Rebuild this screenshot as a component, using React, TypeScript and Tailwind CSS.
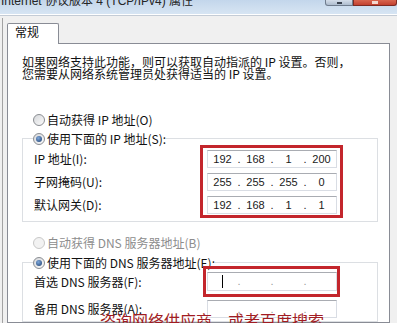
import React from 'react';

const cjk = "font-['Noto_Sans_CJK_SC',sans-serif]";

interface RadioProps {
  checked?: boolean;
  disabled?: boolean;
}

const Radio = ({ checked, disabled }: RadioProps) => (
  <span
    className={`w-[12px] h-[12px] rounded-full border flex items-center justify-center shrink-0 ${
      disabled
        ? 'border-[#c8c8c8] bg-[#f2f2f2]'
        : 'border-[#8a8d92] bg-linear-to-br from-[#d6d8db] to-[#fbfbfb]'
    }`}
  >
    {checked && (
      <span className="w-[6px] h-[6px] rounded-full bg-[radial-gradient(circle_at_40%_35%,#7ea8dc,#1c3d6c)]" />
    )}
  </span>
);

interface RadioRowProps extends RadioProps {
  label: string;
}

const RadioRow = ({ label, checked, disabled }: RadioRowProps) => (
  <div className="h-[13px] flex items-center gap-[2px]">
    <Radio checked={checked} disabled={disabled} />
    <span
      className={`text-[12px] leading-[12px] whitespace-nowrap ${
        disabled ? 'text-[#8d8d8d]' : 'text-[#111]'
      }`}
    >
      {label}
    </span>
  </div>
);

interface IpFieldProps {
  values?: string[];
  caret?: boolean;
  height: string;
}

const IpField = ({ values, caret, height }: IpFieldProps) => {
  const cells = values ?? ['', '', '', ''];
  return (
    <div
      className={`w-[130px] ${height} bg-white border border-[#d9dde4] border-t-[#a9acb2] flex items-center font-['Liberation_Sans',sans-serif] text-[11px] text-[#1a1a1a]`}
    >
      {cells.map((v, i) => (
        <React.Fragment key={i}>
          <span className="flex-1 text-center flex items-center justify-center">
            {caret && i === 0 ? <span className="w-px h-[13px] bg-black" /> : v}
          </span>
          {i < 3 && (
            <span className={`w-[4px] text-center ${values ? '' : 'text-[#9a9a9a]'}`}>.</span>
          )}
        </React.Fragment>
      ))}
    </div>
  );
};

const Label = ({ text }: { text: string }) => (
  <div className="h-[18px] flex items-center ml-[1px] text-[12px] leading-[12px] text-[#111] whitespace-nowrap">
    {text}
  </div>
);

export default function App() {
  return (
    <div className={`w-[397px] h-[323px] overflow-hidden relative flex flex-col bg-[#f0f0f0] ${cjk}`}>
      {/* title bar */}
      <div className="h-[14px] shrink-0 flex justify-between items-start bg-linear-to-b from-[#c3d6eb] to-[#d7e5f3] overflow-hidden">
        <span className="-mt-[5px] ml-[1px] text-[12px] leading-[12px] text-[#252525] whitespace-nowrap font-['Liberation_Sans','Noto_Sans_CJK_SC',sans-serif]">
          Internet 协议版本 4 (TCP/IPv4) 属性
        </span>
        <div className="flex">
          <div className="w-[28px] h-[6px] rounded-bl-[3px] border border-t-0 border-[#6f7c8d] bg-linear-to-b from-[#d3dde9] to-[#aebcce] flex justify-center">
            <span className="mt-[2px] w-[5px] h-[2px] bg-[#3a4350]" />
          </div>
          <div className="w-[44px] h-[6px] rounded-br-[3px] border border-t-0 border-[#7d2a22] bg-linear-to-b from-[#d8654f] to-[#c2402f] flex justify-center">
            <span className="mt-[1px] w-[6px] h-[3px] bg-[#f3d7cf]" />
          </div>
        </div>
      </div>
      <div className="h-px bg-white shrink-0" />
      <div className="h-px bg-[#c4ccd6] shrink-0" />

      {/* dialog body */}
      <div className="flex-1 mt-[2px] ml-[2px] border-l border-[#a3a3a3] flex flex-col">
        <div className="mt-[5px] ml-[4px] w-[52px] h-[21px] -mb-px relative z-10 bg-white border border-b-0 border-[#898c95] rounded-t-[2px] pl-[7px] pt-[2px] text-[12px] leading-[12px] text-[#111]">
          常规
        </div>
        <div className="ml-[4px] w-[383px] flex-1 bg-white border border-[#898c95] flex flex-col">
          <p className="mt-[12px] ml-[14px] text-[12px] leading-[12px] text-[#111] whitespace-nowrap">
            如果网络支持此功能，则可以获取自动指派的 IP 设置。否则，
            <br />
            您需要从网络系统管理员处获得适当的 IP 设置。
          </p>

          <div className="mt-[33px] ml-[25px]">
            <RadioRow label="自动获得 IP 地址(O)" />
          </div>

          <fieldset className="mt-[6px] ml-[14px] w-[356px] border border-[#dcdfe3] pl-[10px] pb-[3px]">
            <legend className="p-0">
              <RadioRow label="使用下面的 IP 地址(S):" checked />
            </legend>
            <div className="flex">
              <div className="w-[167px] pt-[5px] flex flex-col gap-[5px]">
                <Label text="IP 地址(I):" />
                <Label text="子网掩码(U):" />
                <Label text="默认网关(D):" />
              </div>
              <div className="border-[3px] border-[#c3262c] pt-[2px] pl-[4px] pr-[3px] pb-[1px] flex flex-col gap-[5px]">
                <IpField height="h-[18px]" values={['192', '168', '1', '200']} />
                <IpField height="h-[18px]" values={['255', '255', '255', '0']} />
                <IpField height="h-[18px]" values={['192', '168', '1', '1']} />
              </div>
            </div>
          </fieldset>

          <div className="mt-[14px] ml-[25px]">
            <RadioRow label="自动获得 DNS 服务器地址(B)" disabled />
          </div>

          <fieldset className="mt-[7px] ml-[14px] w-[356px] border border-[#dcdfe3] pl-[10px] pb-[3px]">
            <legend className="p-0">
              <RadioRow label="使用下面的 DNS 服务器地址(E):" checked />
            </legend>
            <div className="-mt-[3px] flex items-center">
              <div className="w-[170px]">
                <Label text="首选 DNS 服务器(F):" />
              </div>
              <div className="border-[3px] border-[#c3262c] pt-[3px] pb-[3px] pl-[1px]">
                <IpField height="h-[19px]" caret />
              </div>
            </div>
            <div className="mt-[3px] flex items-center">
              <div className="w-[174px]">
                <Label text="备用 DNS 服务器(A):" />
              </div>
              <IpField height="h-[18px]" />
            </div>
          </fieldset>
        </div>
      </div>

      {/* caption overlaid on the screenshot */}
      <span className="absolute left-[100px] top-[312px] text-[16px] leading-[16px] text-[#a11c22] whitespace-nowrap">
        咨询网络供应商，或者百度搜索
      </span>
    </div>
  );
}
